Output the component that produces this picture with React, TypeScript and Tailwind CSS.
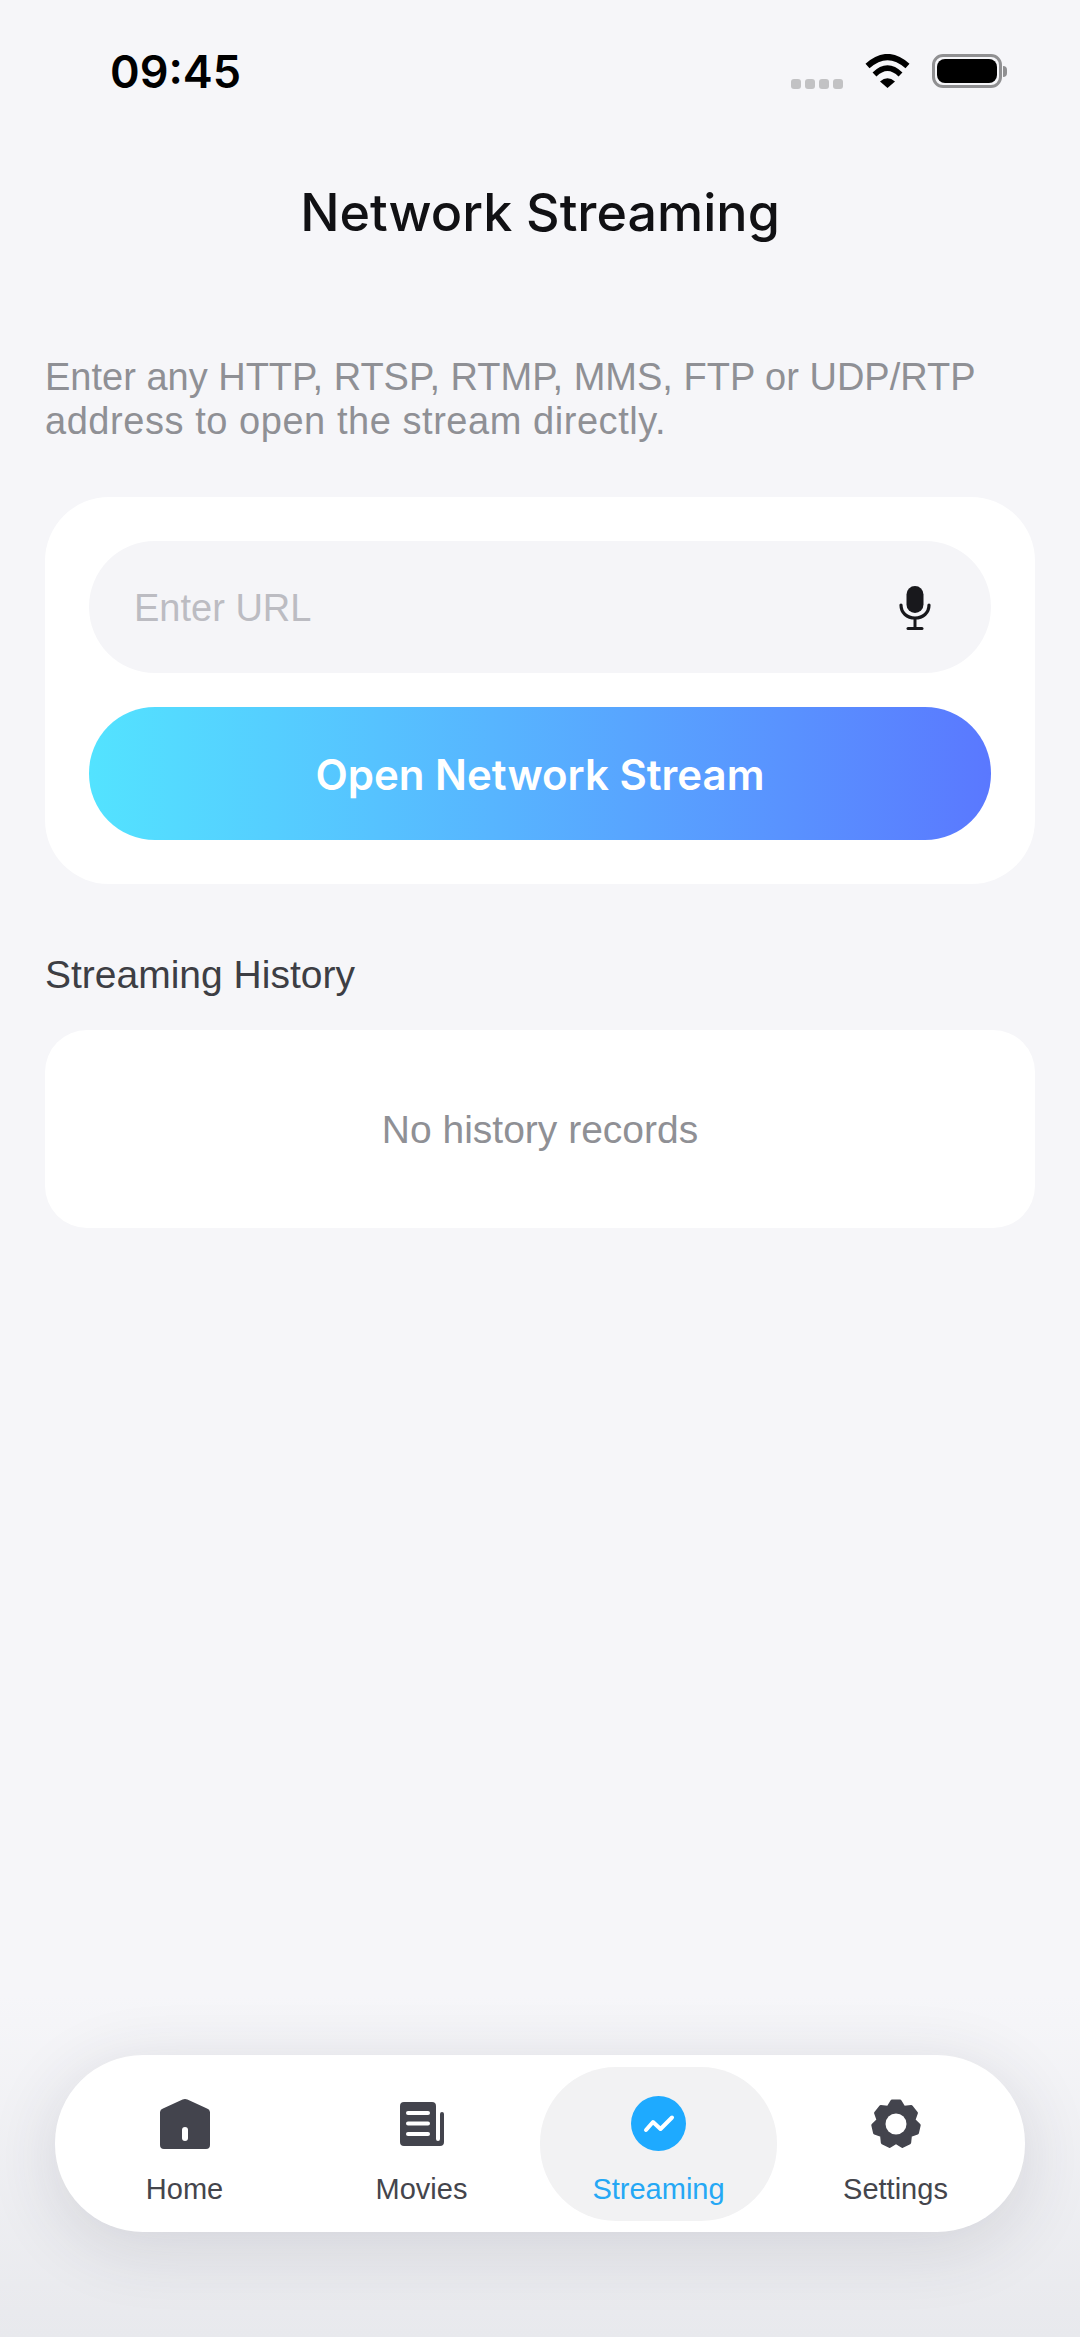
const sansFont = { fontFamily: '"Liberation Sans", Arial, sans-serif' };
const interFont = { fontFamily: 'Inter, "Liberation Sans", sans-serif' };

function HomeIcon() {
  return (
    <svg width="50" height="50" viewBox="0 0 50 50" fill="none">
      <path
        d="M22.600.6a6 6 0 0 1 4.800 0L47 9.500a4 4 0 0 1 3 3.500V46a4 4 0 0 1-4 4H4a4 4 0 0 1-4-4V13a4 4 0 0 1 3-3.500Z"
        fill="#43444d"
      />
      <rect x="22" y="28" width="6" height="14" rx="3" fill="#fff" />
    </svg>
  );
}

function MoviesIcon() {
  return (
    <svg width="44" height="44" viewBox="0 0 44 44" fill="none">
      <path
        d="M4 0h28a4 4 0 0 1 4 4v33a2 2 0 0 0 4 0V12a2 2 0 0 1 4 0v28a4 4 0 0 1-4 4H4a4 4 0 0 1-4-4V4a4 4 0 0 1 4-4Z"
        fill="#43444d"
      />
      <rect x="6" y="9" width="24" height="4" rx="2" fill="#fff" />
      <rect x="6" y="19.500" width="24" height="4" rx="2" fill="#fff" />
      <rect x="6" y="30" width="24" height="4" rx="2" fill="#fff" />
    </svg>
  );
}

function StreamingIcon() {
  return (
    <svg width="55" height="55" viewBox="0 0 55 55" fill="none">
      <circle cx="27.500" cy="27.500" r="27.500" fill="#1eaaff" />
      <path
        d="M15 34l7-8 7.500 7L41 21.500"
        stroke="#fff"
        strokeWidth="4"
        strokeLinecap="round"
        strokeLinejoin="round"
      />
    </svg>
  );
}

// seven rounded teeth, same as the reference gear
function gearPath() {
  const pts: string[] = [];
  for (let k = 0; k < 7; k++) {
    const a = -90 + (k * 360) / 7;
    [
      [a - 24, 18.5],
      [a - 10, 23],
      [a + 10, 23],
      [a + 24, 18.5],
    ].forEach(([deg, r]) => {
      const rad = (deg * Math.PI) / 180;
      pts.push(`${(25 + r * Math.cos(rad)).toFixed(2)} ${(25 + r * Math.sin(rad)).toFixed(2)}`);
    });
  }
  return "M" + pts.join("L") + "Z";
}

function SettingsIcon() {
  return (
    <svg width="50" height="50" viewBox="0 0 50 50" fill="none">
      <path d={gearPath()} fill="#43444d" stroke="#43444d" strokeWidth="3.500" strokeLinejoin="round" />
      <circle cx="25" cy="25" r="10.500" fill="#fff" />
    </svg>
  );
}

function MicIcon() {
  return (
    <svg className="mt-[2px]" width="32" height="44" viewBox="0 0 32 44" fill="none">
      <rect x="7.500" y="0" width="17" height="27" rx="8.500" fill="#18181c" />
      <path d="M2 19c0 8 6 13 14 13s14-5 14-13" stroke="#18181c" strokeWidth="3.200" strokeLinecap="round" />
      <path d="M16 32v10" stroke="#18181c" strokeWidth="3" />
      <path d="M9 42.500h14" stroke="#18181c" strokeWidth="3" strokeLinecap="round" />
    </svg>
  );
}

function StatusIcons() {
  return (
    <div className="mt-[7px] flex items-start">
      <div className="mt-[25px] flex gap-[4px]">
        {[0, 1, 2, 3].map((i) => (
          <span key={i} className="h-[10px] w-[10px] rounded-[3px] bg-[#c2c2c4]" />
        ))}
      </div>
      <svg className="ml-[22px]" width="45" height="34" viewBox="0 0 45 34" fill="none">
        <path d="M15 27.500Q22.500 21 30 27.500L22.500 34Z" fill="#000" />
        <path d="M9.500 20.500Q22.500 7.500 35.500 20.500" stroke="#000" strokeWidth="5.500" />
        <path d="M2.500 12Q22.500-6 42.500 12" stroke="#000" strokeWidth="6" />
      </svg>
      <div className="ml-[22px] flex items-center">
        <div className="flex h-[34px] w-[70px] items-center rounded-[11px] border-[3px] border-[#909092] p-[2px]">
          <div className="h-full w-full rounded-[8px] bg-black" />
        </div>
        <div className="ml-[1px] h-[11px] w-[4px] rounded-r-full bg-[#909092]" />
      </div>
    </div>
  );
}

function Tab({
  label,
  active,
  children,
}: {
  label: string;
  active?: boolean;
  children: React.ReactNode;
}) {
  return (
    <div
      className={`flex h-[154px] w-[237px] flex-col items-center rounded-[76px] ${
        active ? "bg-[#f2f2f3]" : ""
      }`}
    >
      <div className="flex h-[104px] items-center justify-center pt-[10px]">{children}</div>
      <span
        className={`text-[29px] leading-[36px] ${active ? "text-[#25a8f5]" : "text-[#44454c]"}`}
      >
        {label}
      </span>
    </div>
  );
}

export default function App() {
  return (
    <div
      className="flex h-[2337px] w-[1080px] flex-col overflow-hidden bg-[#f6f6f9]"
      style={sansFont}
    >
      <div className="flex h-[100px] items-start justify-between pl-[110px] pr-[73px] pt-[47px]">
        <span className="text-[45px] font-semibold leading-[50px] text-black" style={interFont}>
          09:45
        </span>
        <StatusIcons />
      </div>

      <h1
        className="mt-[82px] text-center text-[52px] font-medium leading-[62px] text-[#111114]"
        style={interFont}
      >
        Network Streaming
      </h1>

      <p className="mt-[111px] px-[45px] text-[38px] leading-[44px] text-[#8f9095]">
        Enter any HTTP, RTSP, RTMP, MMS, FTP or UDP/RTP
        <br />
        <span className="tracking-[0.55px]">address to open the stream directly.</span>
      </p>

      <section className="mx-[45px] mt-[54px] flex flex-col gap-[34px] rounded-[64px] bg-white p-[44px]">
        <div className="flex h-[132px] items-center justify-between rounded-[66px] bg-[#f5f5f8] pl-[45px] pr-[60px]">
          <span className="pt-[3px] text-[38px] text-[#bcbcc2]">Enter URL</span>
          <MicIcon />
        </div>
        <button
          className="h-[133px] rounded-[66px] bg-gradient-to-r from-[#53e3ff] to-[#5a78ff] pt-[2px] text-[42px] font-semibold text-white"
          style={interFont}
        >
          Open Network Stream
        </button>
      </section>

      <h2 className="mt-[69px] px-[45px] text-[39px] leading-[44px] text-[#3d3e44]">Streaming History</h2>

      <section className="mx-[45px] mt-[33px] flex h-[198px] items-center justify-center rounded-[42px] bg-white">
        <span className="pt-[3px] text-[39px] text-[#8f9095]">No history records</span>
      </section>

      <div className="mt-auto bg-gradient-to-b from-transparent to-[#e8e9ed] px-[55px] pb-[105px] pt-[60px]">
        <nav className="flex h-[177px] items-center justify-center rounded-[88px] bg-white shadow-[0_14px_70px_rgba(50,52,70,0.14)]">
          <Tab label="Home">
            <HomeIcon />
          </Tab>
          <Tab label="Movies">
            <MoviesIcon />
          </Tab>
          <Tab label="Streaming" active>
            <StreamingIcon />
          </Tab>
          <Tab label="Settings">
            <SettingsIcon />
          </Tab>
        </nav>
      </div>
    </div>
  );
}
